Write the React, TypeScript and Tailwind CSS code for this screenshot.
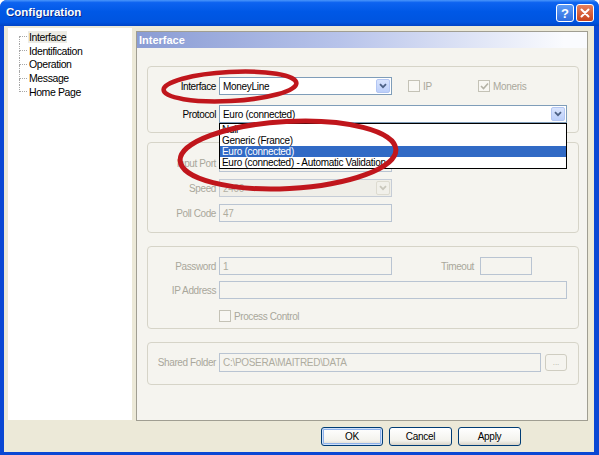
import React from "react";

const font = "font-['Liberation_Sans',Arial,sans-serif]";

function Chevron({ disabled }: { disabled?: boolean }) {
  return (
    <svg width="8" height="6" viewBox="0 0 8 6">
      <path d="M1 1.2 L4 4.2 L7 1.2" fill="none" stroke={disabled ? "#c9c7bc" : "#4d6185"} strokeWidth="1.8" />
    </svg>
  );
}

function Combo({ value, w, disabled }: { value: string; w: string; disabled?: boolean }) {
  return (
    <div className={`${w} h-[18px] flex items-center border ${disabled ? "border-[#c5ccd6] bg-[#efeee8]" : "border-[#7f9db9] bg-white"}`}>
      <span className={`flex-1 pl-[3px] text-[10px] tracking-[-0.3px] ${disabled ? "text-[#b3b1a4]" : "text-black"}`}>{value}</span>
      <div className={`w-[14px] h-[14px] mr-[1px] flex items-center justify-center rounded-[2px] border ${disabled ? "border-[#dddbd0] bg-[#f1f0ea]" : "border-[#b3c6f3] bg-[linear-gradient(to_bottom,#d9e4fd,#bccffa)]"}`}>
        <Chevron disabled={disabled} />
      </div>
    </div>
  );
}

function Field({ value, w, h = "h-[18px]" }: { value?: string; w: string; h?: string }) {
  return (
    <div className={`${w} ${h} flex items-center border border-[#b9c4d2] bg-[#f5f4ef] pl-[3px] text-[10px] tracking-[-0.3px] text-[#aeac9f]`}>
      {value}
    </div>
  );
}

function Check({ checked }: { checked?: boolean }) {
  return (
    <div className="w-[12px] h-[12px] border border-[#c4c2b6] bg-[#f8f7f3] flex items-center justify-center">
      {checked && (
        <svg width="9" height="8" viewBox="0 0 9 8">
          <path d="M1 4 L3.5 6.5 L8 1.5" fill="none" stroke="#b4b2a6" strokeWidth="1.6" />
        </svg>
      )}
    </div>
  );
}

function Label({ children, disabled }: { children: React.ReactNode; disabled?: boolean }) {
  return (
    <div className={`w-[68px] mr-[3px] text-right text-[10px] tracking-[-0.4px] ${disabled ? "text-[#a9a79b]" : "text-black"}`}>
      {children}
    </div>
  );
}

function Group({ className, children }: { className: string; children: React.ReactNode }) {
  return (
    <div className={`w-[432px] border border-[#d6d4c8] rounded-[4px] flex flex-col ${className}`}>
      {children}
    </div>
  );
}

const treeItems = ["Interface", "Identification", "Operation", "Message", "Home Page"];

function Tree() {
  return (
    <div className="w-[124px] h-[392px] bg-white pl-[11px] pt-[2px]">
      {treeItems.map((item, i) => (
        <div key={item} className="flex h-[13.75px] items-center">
          <div className="w-[8px] self-stretch flex flex-col">
            <div className={i === 0 ? "flex-1 border-b border-dotted border-[#a7a7a7]" : "flex-1 border-l border-b border-dotted border-[#a7a7a7]"} />
            <div className={i === treeItems.length - 1 ? "flex-1" : "flex-1 border-l border-dotted border-[#a7a7a7]"} />
          </div>
          <span className={`ml-[1px] px-[1px] h-[12px] leading-[12px] text-[10.5px] tracking-[-0.4px] text-black ${i === 0 ? "bg-[#ecebe4]" : ""}`}>
            {item}
          </span>
        </div>
      ))}
    </div>
  );
}

function Panel() {
  return (
    <div className="ml-[4px] mt-[3px] w-[452px] h-[390px] border border-[#a09e92] bg-[#f5f4ef] flex flex-col">
      <div className="h-[16px] flex items-center pl-[2px] bg-[linear-gradient(to_right,#8a9cd4,#b7c3ea_45%,#fafbfe_95%)] text-[11px] font-bold text-white">
        Interface
      </div>
      <div className="flex flex-col pl-[10px] pt-[18px]">
        <Group className="pt-[10px] pb-[9px] gap-[10px]">
          <div className="flex items-center h-[18px]">
            <Label>Interface</Label>
            <Combo value="MoneyLine" w="w-[173px]" />
            <div className="ml-[16px] w-[70px] flex items-center">
              <Check />
              <span className="ml-[3px] text-[10px] tracking-[-0.3px] text-[#aaa89c]">IP</span>
            </div>
            <Check checked />
            <span className="ml-[3px] text-[10px] tracking-[-0.3px] text-[#aaa89c]">Moneris</span>
          </div>
          <div className="flex items-center h-[18px]">
            <Label>Protocol</Label>
            <div className="relative">
              <Combo value="Euro (connected)" w="w-[348px]" />
              <div className="absolute left-0 top-[18px] z-10 w-[348px] h-[46px] border border-black bg-white flex flex-col text-[10px] tracking-[-0.3px] text-black">
                <div className="h-[11px] leading-[11px] pl-[2px]">Null</div>
                <div className="h-[11px] leading-[11px] pl-[2px]">Generic (France)</div>
                <div className="h-[11px] leading-[11px] pl-[2px] bg-[#316ac5] text-white">Euro (connected)</div>
                <div className="h-[11px] leading-[11px] pl-[2px]">Euro (connected) - Automatic Validation</div>
              </div>
            </div>
          </div>
        </Group>

        <Group className="mt-[9px] pt-[11px] pb-[10px] gap-[7px]">
          <div className="flex items-center h-[18px]">
            <Label disabled>Input Port</Label>
            <Field w="w-[173px]" />
          </div>
          <div className="flex items-center h-[18px]">
            <Label disabled>Speed</Label>
            <Combo value="2400" w="w-[173px]" disabled />
          </div>
          <div className="flex items-center h-[18px]">
            <Label disabled>Poll Code</Label>
            <Field value="47" w="w-[173px]" />
          </div>
        </Group>

        <Group className="mt-[13px] pt-[10px] pb-[6px]">
          <div className="flex items-center h-[18px]">
            <Label disabled>Password</Label>
            <Field value="1" w="w-[173px]" />
            <div className="w-[82px] text-right mr-[6px] text-[10px] tracking-[-0.4px] text-[#a9a79b]">Timeout</div>
            <Field w="w-[52px]" />
          </div>
          <div className="flex items-center h-[18px] mt-[6px]">
            <Label disabled>IP Address</Label>
            <Field w="w-[348px]" />
          </div>
          <div className="flex items-center h-[12px] mt-[11px] pl-[71px]">
            <Check />
            <span className="ml-[3px] text-[10px] tracking-[-0.4px] text-[#a9a79b]">Process Control</span>
          </div>
        </Group>

        <Group className="mt-[13px] pt-[10px] pb-[12px]">
          <div className="flex items-center h-[19px]">
            <Label disabled>Shared Folder</Label>
            <Field value="C:\POSERA\MAITRED\DATA" w="w-[322px]" h="h-[19px]" />
            <div className="ml-[4px] w-[22px] h-[17px] rounded-[3px] border border-[#cfcdc1] bg-[#f5f4ef] flex items-center justify-center text-[8px] text-[#b0aea0]">
              ...
            </div>
          </div>
        </Group>
      </div>
    </div>
  );
}

function DlgButton({ children, primary }: { children: React.ReactNode; primary?: boolean }) {
  return (
    <div
      className={`h-[19px] flex items-center justify-center rounded-[3px] border border-[#003c74] bg-[linear-gradient(to_bottom,#ffffff,#f3f2ec_75%,#d8d3c8)] text-[10px] tracking-[-0.3px] text-black ${
        primary ? "w-[62px] shadow-[inset_0_0_0_1px_#cfe0fa,inset_0_0_0_2px_#8fb2ea]" : "w-[63px]"
      }`}
    >
      {children}
    </div>
  );
}

export default function App() {
  return (
    <div className={`${font} relative w-[599px] h-[455px] flex flex-col bg-[#0a47d4] rounded-t-[7px] overflow-hidden`}>
      <div className="h-[26px] flex items-center pl-[6px] pr-[5px] bg-[linear-gradient(to_bottom,#4a96fb_0%,#0d63f0_10%,#0058e6_45%,#0054df_85%,#0044c6_100%)]">
        <span className="flex-1 text-[11.5px] font-bold text-white [text-shadow:1px_1px_0_#0c2a8c]">Configuration</span>
        <div className="w-[18px] h-[18px] rounded-[3px] border border-white bg-[linear-gradient(to_bottom,#5d9cf6,#2f6de0)] flex items-center justify-center text-[13px] font-bold leading-none text-white">
          ?
        </div>
        <div className="ml-[2px] w-[18px] h-[18px] rounded-[3px] border border-white bg-[linear-gradient(to_bottom,#e5805f,#c8431c)] flex items-center justify-center">
          <svg width="10" height="10" viewBox="0 0 10 10">
            <path d="M1.5 1.5 L8.5 8.5 M8.5 1.5 L1.5 8.5" stroke="white" strokeWidth="2" strokeLinecap="round" />
          </svg>
        </div>
      </div>
      <div className="flex-1 flex flex-col bg-[#ece9d8] ml-[4px] mr-[5px] mb-[3px]">
        <div className="flex h-[395px] pt-[2px] pl-[4px]">
          <Tree />
          <Panel />
        </div>
        <div className="flex-1 flex items-center justify-end pr-[73px] gap-[6px]">
          <DlgButton primary>OK</DlgButton>
          <DlgButton>Cancel</DlgButton>
          <DlgButton>Apply</DlgButton>
        </div>
      </div>
      <svg className="absolute inset-0 pointer-events-none z-20" width="599" height="455" viewBox="0 0 599 455">
        <ellipse cx="230" cy="86.5" rx="66.5" ry="14.5" transform="rotate(-3 230 86.5)" fill="none" stroke="#c0161c" strokeWidth="4.5" />
        <ellipse cx="288" cy="155" rx="108" ry="33.5" transform="rotate(-3 288 155)" fill="none" stroke="#c0161c" strokeWidth="5" />
      </svg>
    </div>
  );
}
